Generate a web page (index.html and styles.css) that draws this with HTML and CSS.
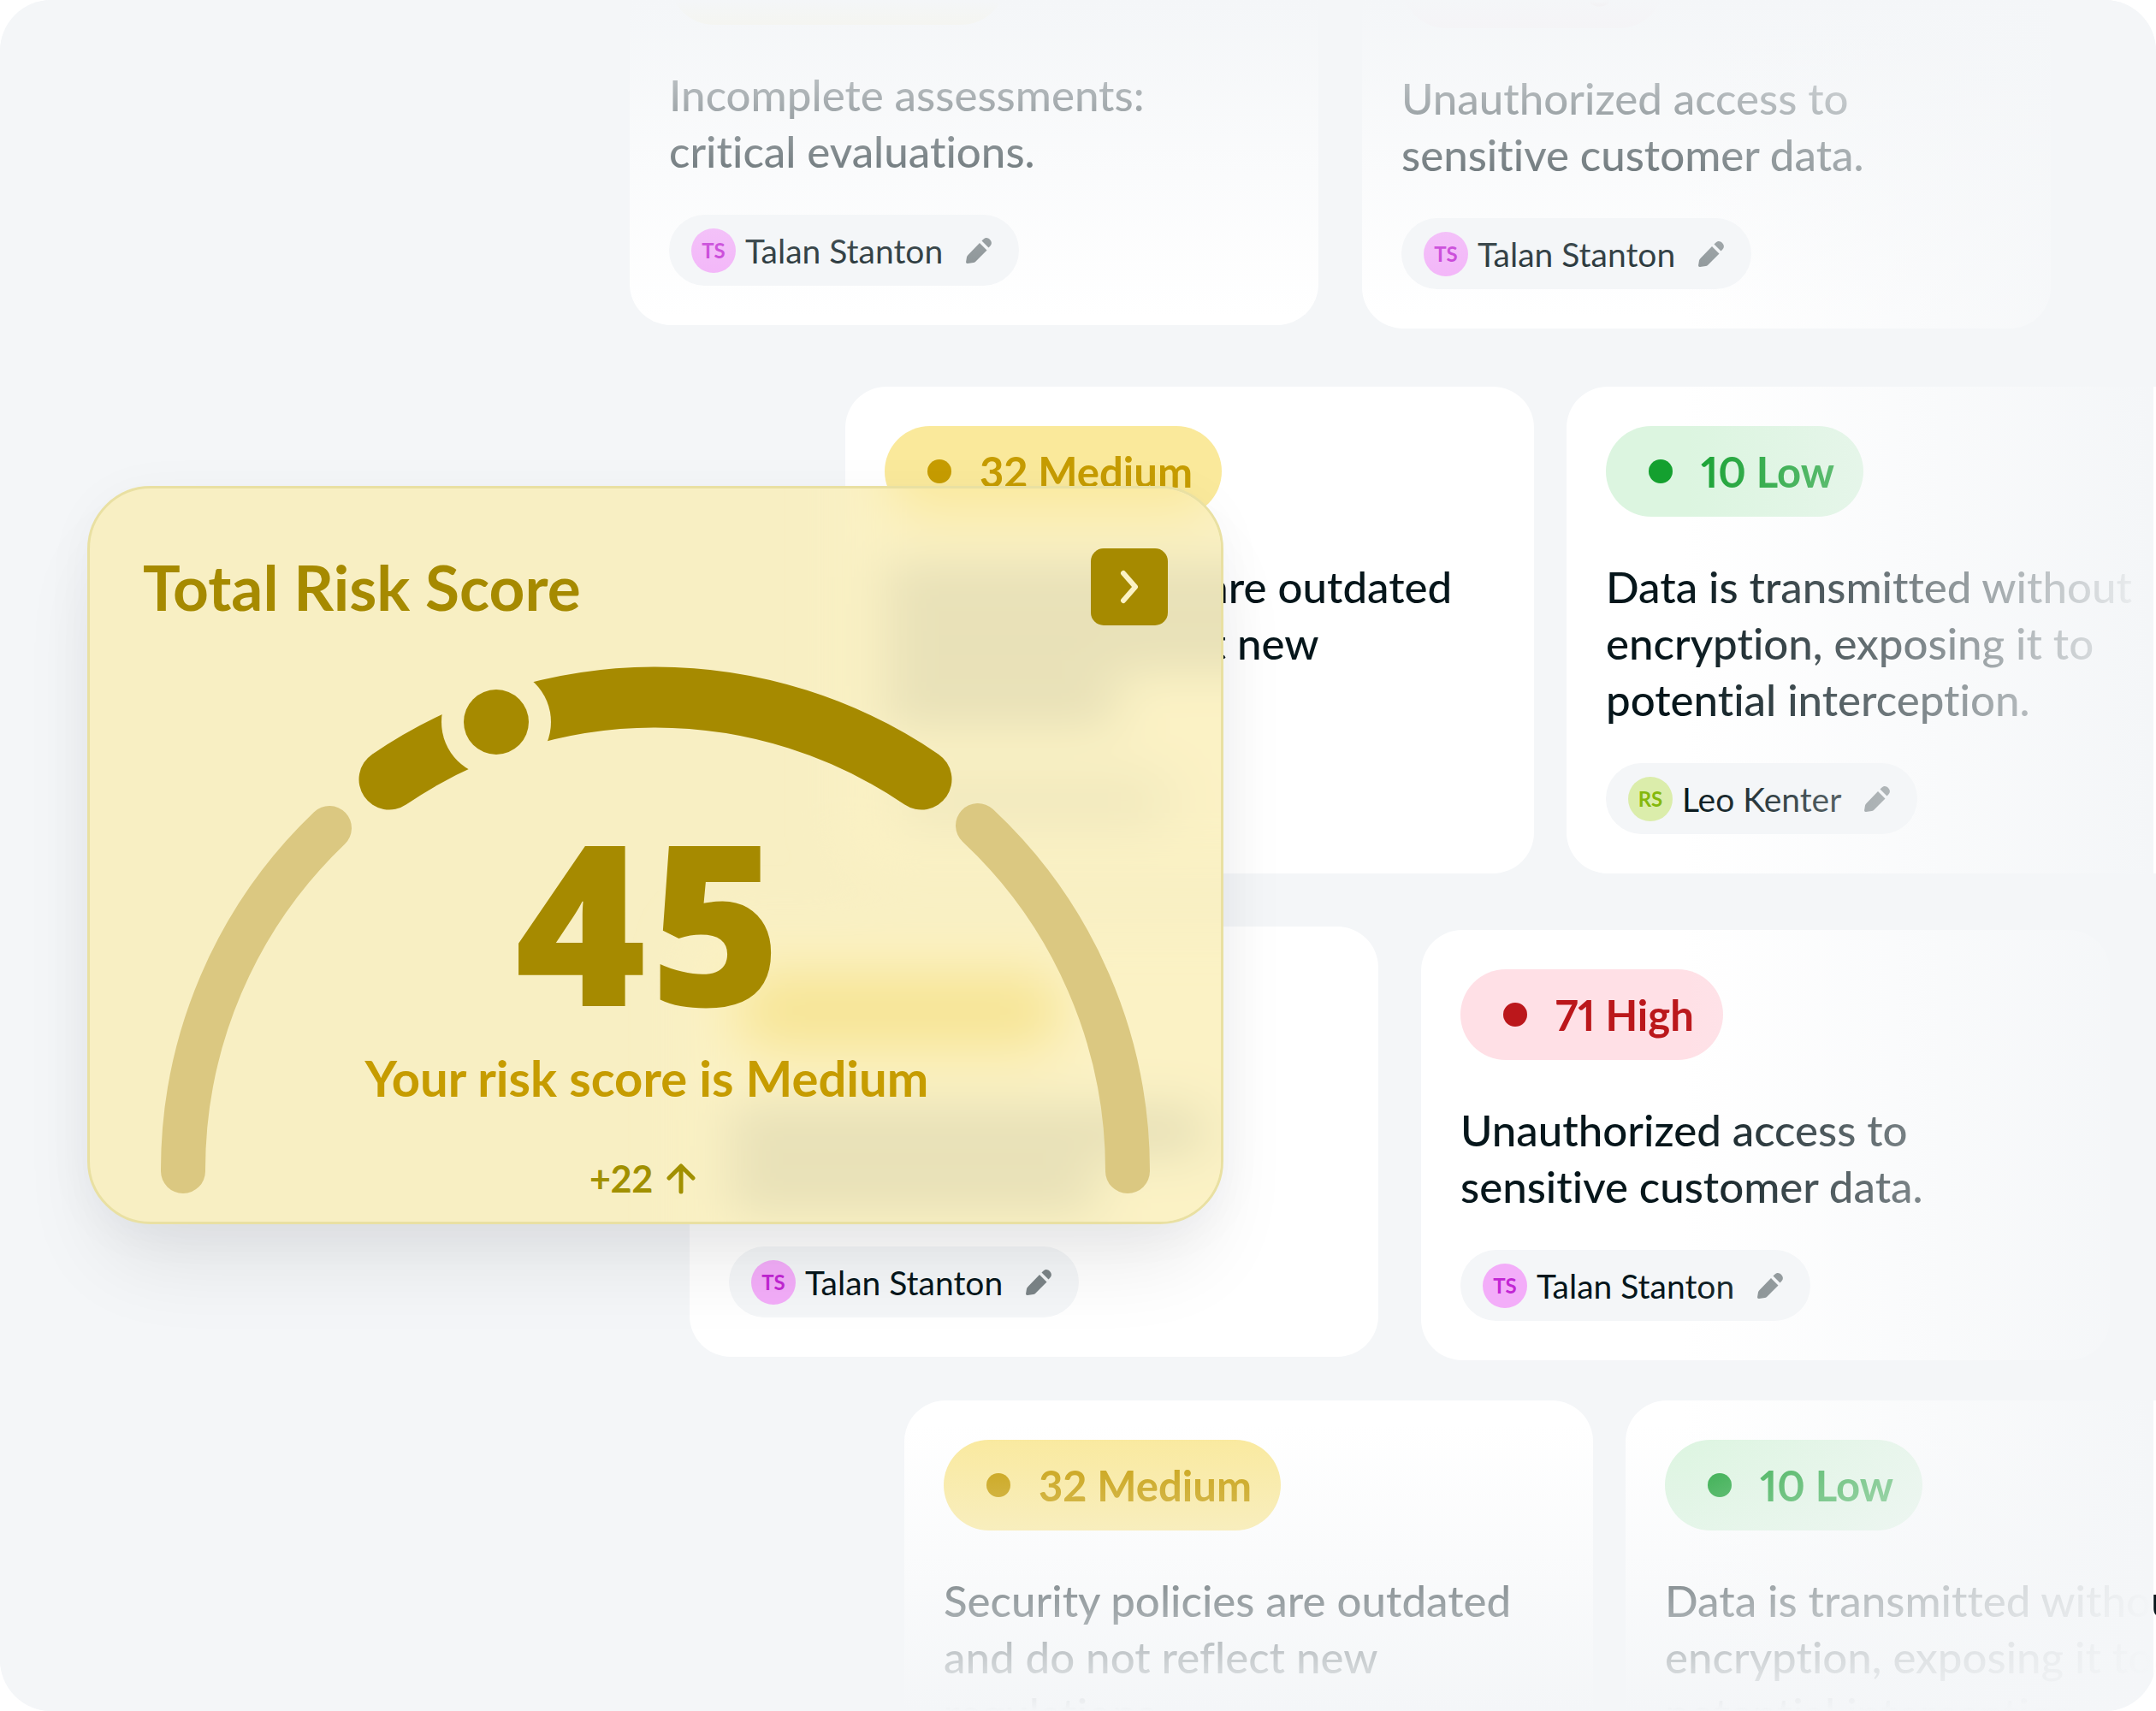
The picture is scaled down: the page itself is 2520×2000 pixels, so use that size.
FILE: index.html
```html
<!DOCTYPE html>
<html lang="en">
<head>
    <meta charset="UTF-8">
    <meta name="viewport" content="width=device-width, initial-scale=1.0">
    <title>Total Risk Score</title>
    <link rel="stylesheet" href="styles.css">
</head>
<body>
    <svg class="sprite" aria-hidden="true">
        <symbol id="icon-pencil" viewBox="0 0 30 30">
            <path d="M2.5 20 16 6l8.500 8.500L11 28c-.6.7-1.300 1-2.200 1.100L2 30c-1.200.1-2-.7-1.900-1.900L1 22.500c.2-1 .7-1.800 1.500-2.500z"/>
            <path d="m18.500 3.500 1.800-1.800c2.600-2.400 5.300-2.100 7.700.3 2.400 2.500 2.500 5.200.2 7.800L26.500 11.500z"/>
        </symbol>
    </svg>

    <main class="stage">
        <div class="row row-first">
            <article class="card">
                <div class="badge medium"><span class="dot"></span>32 Medium</div>
                <p class="finding">Incomplete assessments: critical evaluations.</p>
                <button class="owner" type="button">
                    <span class="avatar pink">TS</span>
                    <span>Talan Stanton</span>
                    <svg class="pencil"><use href="#icon-pencil"/></svg>
                </button>
            </article>
            <article class="card">
                <div class="badge high"><span class="dot"></span>71 High</div>
                <p class="finding">Unauthorized access to sensitive customer data.</p>
                <button class="owner" type="button">
                    <span class="avatar pink">TS</span>
                    <span>Talan Stanton</span>
                    <svg class="pencil"><use href="#icon-pencil"/></svg>
                </button>
            </article>
        </div>

        <div class="row row-second">
            <article class="card">
                <div class="badge medium"><span class="dot"></span>32 Medium</div>
                <p class="finding">Security policies are outdated and do not reflect new regulations.</p>
                <button class="owner" type="button">
                    <span class="avatar lime">RS</span>
                    <span>Leo Kenter</span>
                    <svg class="pencil"><use href="#icon-pencil"/></svg>
                </button>
            </article>
            <article class="card">
                <div class="badge low"><span class="dot"></span>10 Low</div>
                <p class="finding">Data is transmitted without encryption, exposing it to potential interception.</p>
                <button class="owner" type="button">
                    <span class="avatar lime">RS</span>
                    <span>Leo Kenter</span>
                    <svg class="pencil"><use href="#icon-pencil"/></svg>
                </button>
            </article>
        </div>

        <div class="row row-third">
            <article class="card">
                <div class="badge medium"><span class="dot"></span>32 Medium</div>
                <p class="finding">Incomplete assessments: critical evaluations.</p>
                <button class="owner" type="button">
                    <span class="avatar pink">TS</span>
                    <span>Talan Stanton</span>
                    <svg class="pencil"><use href="#icon-pencil"/></svg>
                </button>
            </article>
            <article class="card">
                <div class="badge high"><span class="dot"></span>71 High</div>
                <p class="finding">Unauthorized access to sensitive customer data.</p>
                <button class="owner" type="button">
                    <span class="avatar pink">TS</span>
                    <span>Talan Stanton</span>
                    <svg class="pencil"><use href="#icon-pencil"/></svg>
                </button>
            </article>
        </div>

        <div class="row row-fourth">
            <article class="card">
                <div class="badge medium"><span class="dot"></span>32 Medium</div>
                <p class="finding">Security policies are outdated and do not reflect new regulations.</p>
            </article>
            <article class="card">
                <div class="badge low"><span class="dot"></span>10 Low</div>
                <p class="finding">Data is transmitted without encryption, exposing it to potential interception.</p>
            </article>
        </div>

        <div class="fade fade-top"></div>
        <div class="fade fade-bottom"></div>
        <div class="fade fade-right"></div>

        <section class="score-panel">
            <!-- frosted shapes of the cards that lie under the panel -->
            <svg class="frost" viewBox="105 571 1322 857" preserveAspectRatio="xMaxYMin slice" aria-hidden="true">
                <filter id="soften" filterUnits="userSpaceOnUse" x="600" y="350" width="1300" height="1400">
                    <feGaussianBlur stdDeviation="30"/>
                </filter>
                <g filter="url(#soften)">
                    <rect class="frost-card" x="988" y="452" width="805" height="570" rx="48"/>
                    <rect class="frost-badge" x="1034" y="498" width="396" height="106" rx="53"/>
                    <rect class="frost-text" x="1034" y="667" width="667" height="42"/>
                    <rect class="frost-text" x="1034" y="733" width="500" height="42"/>
                    <rect class="frost-text" x="1034" y="799" width="270" height="42"/>
                    <rect class="frost-owner" x="1034" y="894" width="362" height="83" rx="42"/>
                    <rect class="frost-name" x="1060" y="915" width="290" height="42"/>
                    <rect class="frost-card" x="806" y="1083" width="805" height="503" rx="48"/>
                    <rect class="frost-badge" x="852" y="1129" width="396" height="106" rx="53"/>
                    <rect class="frost-badge-text" x="890" y="1160" width="330" height="42"/>
                    <rect class="frost-text" x="852" y="1301" width="555" height="42"/>
                    <rect class="frost-text" x="852" y="1367" width="430" height="42"/>
                </g>
            </svg>

            <header class="score-header">
                <h1>Total Risk Score</h1>
                <button class="open-button" type="button" aria-label="Open risk score">
                    <svg viewBox="0 0 24 40"><path d="M5 4l14 16L5 36"/></svg>
                </button>
            </header>

            <div class="gauge">
                <svg class="gauge-arc" viewBox="187 779 1158 617" aria-hidden="true">
                    <mask id="knob-gap" maskUnits="userSpaceOnUse" x="187" y="779" width="1158" height="617">
                        <rect x="187" y="779" width="1158" height="617" fill="#fff"/>
                        <circle cx="580" cy="844" r="64" fill="#000"/>
                    </mask>
                    <path class="arc-off" d="M214 1369A552 552 0 0 1 385 968"/>
                    <path class="arc-off" d="M1143 965A552 552 0 0 1 1318 1369"/>
                    <path class="arc-on" mask="url(#knob-gap)" d="M455 911A552 552 0 0 1 1077 911"/>
                    <circle class="knob" cx="580" cy="844" r="38"/>
                </svg>
                <div class="readout">
                    <div class="score">45</div>
                    <p class="verdict">Your risk score is Medium</p>
                    <p class="trend">
                        +22
                        <svg viewBox="0 0 34 36"><path d="M17 33V4M3 17 17 3l14 14"/></svg>
                    </p>
                </div>
            </div>
        </section>
    </main>
</body>
</html>
```
FILE: styles.css
```css
* {
    margin: 0;
    padding: 0;
    box-sizing: border-box;
}

body {
    font-family: Lato, "Open Sans", sans-serif;
    font-variant-ligatures: none;
    font-variant-numeric: proportional-nums;
    background: #ffffff;
    color: #06161b;
}

button {
    border: none;
    font: inherit;
    color: inherit;
    cursor: pointer;
}

.sprite {
    display: none;
}

.stage {
    position: relative;
    height: 100vh;
    overflow: hidden;
    background: #f4f6f8;
    border-radius: 60px;
}

/* Finding cards */
.row {
    display: flex;
    align-items: flex-start;
}

.row-first {
    margin: -123px 0 68px 736px;
    gap: 51px;
}

.row-second {
    margin: 0 0 62px 988px;
    gap: 38px;
}

.row-third {
    margin: 0 0 47px 806px;
    gap: 50px;
}

.row-fourth {
    margin-left: 1057px;
    gap: 38px;
}

.row-first .card + .card,
.row-third .card + .card {
    margin-top: 4px;
}

.card {
    display: flex;
    flex: none;
    flex-direction: column;
    align-items: flex-start;
    width: 805px;
    padding: 46px;
    background: #ffffff;
    border-radius: 48px;
}

.badge {
    display: flex;
    align-items: center;
    gap: 33px;
    height: 106px;
    padding: 0 34px 0 50px;
    border-radius: 53px;
    font-size: 49px;
    font-weight: 700;
}

.dot {
    width: 28px;
    height: 28px;
    border-radius: 50%;
    background: currentColor;
}

.medium {
    background: #fae99b;
    color: #c69c00;
}

.low {
    background: #dcf5e0;
    color: #14a02f;
}

.high {
    background: #ffe0e6;
    color: #bb171b;
}

.finding {
    max-width: 700px;
    margin: 49px 0 41px;
    font-size: 51px;
    font-weight: 500;
    line-height: 66px;
}

.owner {
    display: flex;
    align-items: center;
    height: 83px;
    padding: 0 32px 0 26px;
    background: #f4f6f8;
    border-radius: 42px;
    font-size: 39px;
}

.avatar {
    width: 52px;
    height: 52px;
    margin-right: 11px;
    border-radius: 50%;
    font-size: 24px;
    font-weight: 700;
    line-height: 52px;
    text-align: center;
}

.pink {
    background: #f3adf9;
    color: #c226d4;
}

.lime {
    background: #dbedab;
    color: #84b80c;
}

.pencil {
    width: 30px;
    height: 30px;
    margin-left: 27px;
    fill: #7b8487;
}

/* Edge fades laid over the cards */
.fade {
    position: absolute;
    pointer-events: none;
}

.fade-top {
    inset: 0 0 auto;
    height: 370px;
    background: linear-gradient(to top, rgba(244, 246, 248, 0), #f4f6f8);
}

.fade-bottom {
    inset: auto 3px 0 0;
    height: 335px;
    background: linear-gradient(to bottom, rgba(244, 246, 248, 0), #f4f6f8);
}

.fade-right {
    inset: 0 3px 0 auto;
    width: 550px;
    background: linear-gradient(to right, rgba(244, 246, 248, 0), #f4f6f8);
}

/* Score panel */
.score-panel {
    position: absolute;
    z-index: 0;
    top: 568px;
    left: 102px;
    width: 1328px;
    padding: 70px 62px 32px;
    overflow: hidden;
    background: #f8efc3;
    border: 3px solid #e9e0a2;
    border-radius: 74px;
    box-shadow: 0 60px 100px -20px rgba(0, 0, 0, 0.09), 0 8px 60px rgba(20, 40, 80, 0.04);
    color: #a68a00;
}

.frost {
    position: absolute;
    z-index: -1;
    inset: 0;
    width: 100%;
    height: 100%;
}

.frost-card {
    fill: #fbf2c5;
}

.frost-badge {
    fill: #f9e99f;
}

.frost-badge-text {
    fill: #c69c00;
    fill-opacity: 0.08;
}

.frost-text {
    fill: #06161b;
    fill-opacity: 0.12;
}

.frost-owner {
    fill: #f8efc3;
}

.frost-name {
    fill: #06161b;
    fill-opacity: 0.04;
}

.score-header {
    display: flex;
    align-items: center;
    justify-content: space-between;
}

.score-header h1 {
    font-size: 73px;
    font-weight: 700;
}

.open-button {
    display: flex;
    align-items: center;
    justify-content: center;
    width: 90px;
    height: 90px;
    background: #a68a00;
    border-radius: 15px;
}

.open-button svg {
    width: 24px;
    height: 40px;
    fill: none;
    stroke: #fbf2c4;
    stroke-width: 6;
    stroke-linecap: round;
    stroke-linejoin: round;
}

.gauge {
    display: grid;
    justify-items: center;
    align-items: end;
    margin-top: 48px;
}

.gauge-arc,
.readout {
    grid-area: 1 / 1;
}

.gauge-arc {
    display: block;
    width: 1158px;
    fill: none;
    stroke-linecap: round;
}

.arc-off {
    stroke: #dbc881;
    stroke-width: 52;
}

.arc-on {
    stroke: #a68a00;
    stroke-width: 71;
}

.knob {
    fill: #a68a00;
}

.readout {
    padding-right: 20px;
    text-align: center;
}

.score {
    font-family: "Open Sans", sans-serif;
    font-size: 262px;
    font-weight: 800;
    line-height: 222px;
}

.verdict {
    margin: 40px 0 66px;
    color: #c69c00;
    font-size: 58px;
    font-weight: 700;
    line-height: 68px;
}

.trend {
    display: flex;
    align-items: center;
    justify-content: center;
    gap: 16px;
    padding-right: 10px;
    color: #a19000;
    font-size: 43px;
    font-weight: 700;
    line-height: 36px;
}

.trend svg {
    width: 34px;
    height: 36px;
    fill: none;
    stroke: currentColor;
    stroke-width: 5;
    stroke-linecap: round;
    stroke-linejoin: round;
}
```
